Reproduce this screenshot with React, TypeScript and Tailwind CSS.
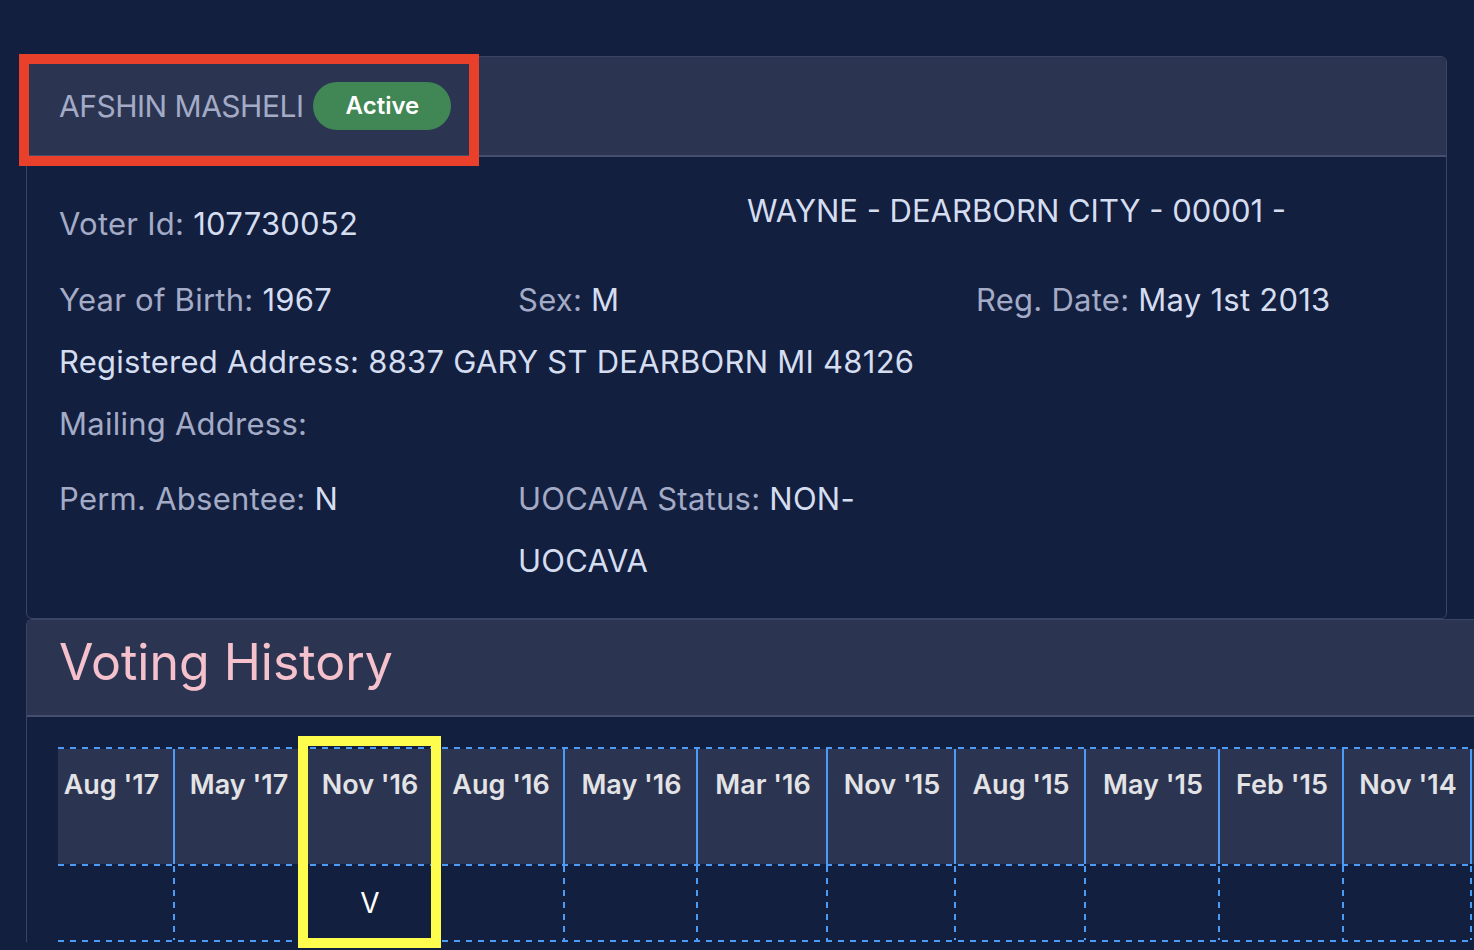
import React from "react";

const cols: { label: string; w: number; v?: string }[] = [
  { label: "Aug '17", w: 117 },
  { label: "May '17", w: 128 },
  { label: "Nov '16", w: 134, v: "V" },
  { label: "Aug '16", w: 128 },
  { label: "May '16", w: 133 },
  { label: "Mar '16", w: 130 },
  { label: "Nov '15", w: 128 },
  { label: "Aug '15", w: 130 },
  { label: "May '15", w: 134 },
  { label: "Feb '15", w: 124 },
  { label: "Nov '14", w: 128 },
  { label: "", w: 130 },
];

const hDash =
  "h-[2px] bg-[repeating-linear-gradient(to_right,#4b9bf7_0_6px,transparent_6px_12px)]";

function Label({ children }: { children: React.ReactNode }) {
  return <span className="text-[#a3abc6]">{children}</span>;
}
function Val({ children }: { children: React.ReactNode }) {
  return <span className="text-[#d5ddf0]">{children}</span>;
}

export default function App() {
  return (
    <div
      className="relative min-h-[950px] w-full overflow-hidden bg-[#131f3f] pt-[56px]"
      style={{ fontFamily: "Inter, 'Open Sans', sans-serif" }}
    >
      {/* Voter card */}
      <div className="ml-[26px] w-[1421px] overflow-hidden rounded-[6px] border border-[#3a4465]">
        <div className="flex h-[100px] items-center gap-[10px] border-b-2 border-[#454f6d] bg-[#2b3552] px-[32px]">
          <span className="text-[30px] tracking-[-0.5px] text-[#a3abc6]">AFSHIN MASHELI</span>
          <span className="flex h-[48px] w-[138px] items-center justify-center rounded-full bg-[#418655] text-[24px] font-semibold text-white">
            Active
          </span>
        </div>
        <div className="px-[32px] pt-[23px] pb-[26px] text-[31px] leading-[62px] tracking-[0.25px]">
          <div className="grid grid-cols-[688px_1fr]">
            <div className="mt-[13px]">
              <Label>Voter Id: </Label>
              <Val>107730052</Val>
            </div>
            <div className="tracking-[0px]">
              <Val>WAYNE - DEARBORN CITY - 00001 -</Val>
            </div>
          </div>
          <div className="mt-[14px] grid grid-cols-[459px_458px_1fr]">
            <div>
              <Label>Year of Birth: </Label>
              <Val>1967</Val>
            </div>
            <div>
              <Label>Sex: </Label>
              <Val>M</Val>
            </div>
            <div>
              <Label>Reg. Date: </Label>
              <Val>May 1st 2013</Val>
            </div>
          </div>
          <div>
            <Val>Registered Address: 8837 GARY ST DEARBORN MI 48126</Val>
          </div>
          <div>
            <Label>Mailing Address:</Label>
          </div>
          <div className="mt-[13px] grid grid-cols-[459px_440px_1fr]">
            <div>
              <Label>Perm. Absentee: </Label>
              <Val>N</Val>
            </div>
            <div>
              <div>
                <Label>UOCAVA Status: </Label>
                <Val>NON-</Val>
              </div>
              <div>
                <Val>UOCAVA</Val>
              </div>
            </div>
            <div />
          </div>
        </div>
      </div>

      {/* Voting history card */}
      <div className="ml-[26px] w-[1500px] rounded-tl-[6px] border-t border-l border-[#3a4465]">
        <div className="flex h-[97px] items-center border-b-2 border-[#454f6d] bg-[#2b3552] px-[32px] pb-[12px]">
          <h2 className="text-[50px] leading-none text-[#f5c1cc]">Voting History</h2>
        </div>
        <div className="pl-[31px] pt-[30px]">
          <div className="flex w-max flex-col">
            <div className={hDash} />
            <div className="flex">
              {cols.map((c, i) => (
                <div
                  key={i}
                  style={{ width: c.w }}
                  className={`h-[115px] shrink-0 bg-[#2b3552] bg-[linear-gradient(#4b9bf7,#4b9bf7)] bg-[length:2px_100%] bg-right bg-no-repeat pt-[15px] text-center text-[27px] font-semibold leading-[42px] text-[#e3e3e6] ${
                    i === 0 ? "pr-[10px]" : ""
                  }`}
                >
                  {c.label}
                </div>
              ))}
            </div>
            <div className={hDash} />
            <div className="flex">
              {cols.map((c, i) => (
                <div
                  key={i}
                  style={{ width: c.w }}
                  className="flex h-[74px] shrink-0 items-center justify-center bg-[repeating-linear-gradient(to_bottom,#4b9bf7_0_6px,transparent_6px_12px)] bg-[length:2px_100%] bg-right bg-no-repeat text-[28px] text-white"
                >
                  {c.v ?? ""}
                </div>
              ))}
            </div>
            <div className={hDash} />
          </div>
        </div>
      </div>

      {/* Annotation overlays */}
      <div className="pointer-events-none absolute left-[19px] top-[54px] h-[112px] w-[460px] border-[10px] border-[#e8402b]" />
      <div className="pointer-events-none absolute left-[298px] top-[736px] h-[212px] w-[143px] border-[10px] border-[#fefc4c]" />
    </div>
  );
}
